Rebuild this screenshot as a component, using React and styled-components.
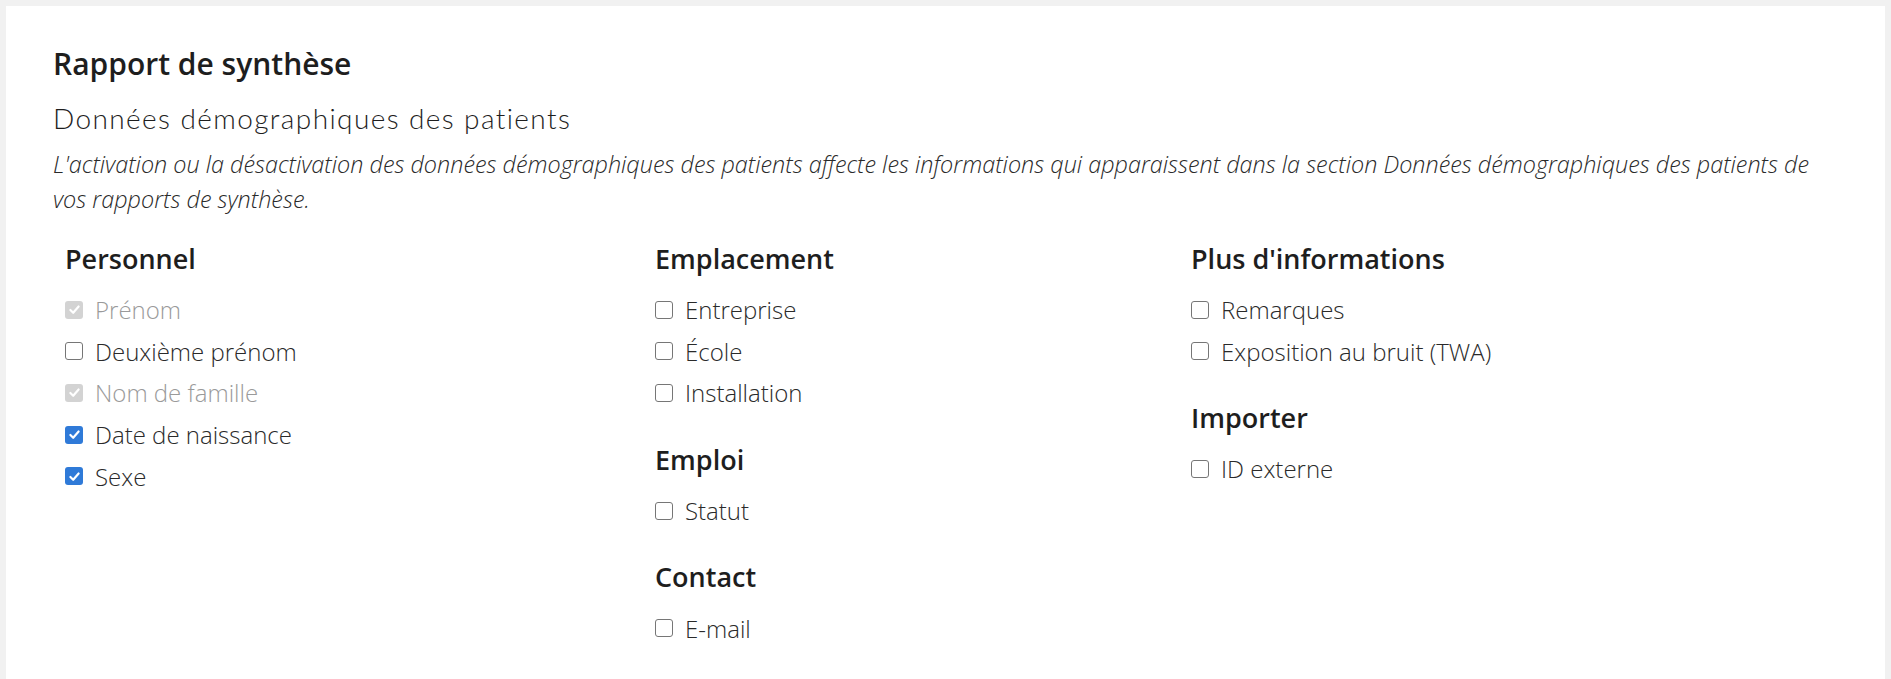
import React from "react";
import styled, { createGlobalStyle } from "styled-components";

const GlobalStyle = createGlobalStyle`
  html, body {
    margin: 0;
    padding: 0;
    background: #f1f1f1;
  }
  body {
    padding: 6px 6px 0 6px;
    font-family: "Open Sans", "Liberation Sans", sans-serif;
    color: #212121;
  }
`;

const Card = styled.div`
  background: #fff;
  box-sizing: border-box;
  min-height: calc(100vh - 6px);
  padding: 40px 47px 20px 47px;
`;

const Title = styled.h2`
  margin: 0;
  font-size: 30px;
  line-height: 35px;
  font-weight: 600;
  color: #1e1e1e;
`;

const Subtitle = styled.h3`
  margin: 22px 0 0 0;
  font-family: Lato, "Open Sans", sans-serif;
  font-size: 28px;
  line-height: 30px;
  font-weight: 300;
  letter-spacing: 1.4px;
  color: #1e1e1e;
`;

const Note = styled.p`
  margin: 14px 0 0 0;
  font-size: 23.4px;
  line-height: 35px;
  font-style: italic;
  font-weight: 300;
  color: #2a2a2a;
`;

const Columns = styled.div`
  display: grid;
  grid-template-columns: 590px 536px 1fr;
  margin-top: 25px;
`;

const Column = styled.div`
  padding-left: 12px;
`;

const Group = styled.div`
  & + & {
    margin-top: 29px;
  }
`;

const GroupTitle = styled.h4`
  margin: 0 0 13px 0;
  font-size: 27px;
  line-height: 34px;
  font-weight: 600;
  color: #1e1e1e;
`;

const Row = styled.label`
  display: flex;
  align-items: center;
  height: 41.6px;
  font-size: 24px;
  font-weight: 300;
  color: ${p => (p.$disabled ? "#9a9a9a" : "#2a2a2a")};
`;

const Box = styled.span`
  box-sizing: border-box;
  flex: none;
  width: 18px;
  height: 18px;
  margin: 0 12px 0 0;
  border-radius: 3px;
  display: flex;
  align-items: center;
  justify-content: center;
  border: ${p => (p.$checked ? "none" : "1.5px solid #767676")};
  background: ${p =>
    p.$checked ? (p.$disabled ? "#d3d3d3" : "#2f7ad8") : "#fff"};
`;

const Check = () => (
  <svg width="13" height="13" viewBox="0 0 12 12">
    <polyline
      points="2.2,6.4 4.8,9 9.8,3.2"
      fill="none"
      stroke="#fff"
      strokeWidth="2"
      strokeLinecap="round"
      strokeLinejoin="round"
    />
  </svg>
);

const Checkbox = ({ label, checked, disabled }) => (
  <Row $disabled={disabled}>
    <Box $checked={checked} $disabled={disabled}>
      {checked && <Check />}
    </Box>
    {label}
  </Row>
);

const columns = [
  [
    {
      title: "Personnel",
      items: [
        { label: "Prénom", checked: true, disabled: true },
        { label: "Deuxième prénom" },
        { label: "Nom de famille", checked: true, disabled: true },
        { label: "Date de naissance", checked: true },
        { label: "Sexe", checked: true }
      ]
    }
  ],
  [
    {
      title: "Emplacement",
      items: [{ label: "Entreprise" }, { label: "École" }, { label: "Installation" }]
    },
    { title: "Emploi", items: [{ label: "Statut" }] },
    { title: "Contact", items: [{ label: "E-mail" }] }
  ],
  [
    {
      title: "Plus d'informations",
      items: [{ label: "Remarques" }, { label: "Exposition au bruit (TWA)" }]
    },
    { title: "Importer", items: [{ label: "ID externe" }] }
  ]
];

export default function App() {
  return (
    <>
      <GlobalStyle />
      <Card>
        <Title>Rapport de synthèse</Title>
        <Subtitle>Données démographiques des patients</Subtitle>
        <Note>
          L'activation ou la désactivation des données démographiques des
          patients affecte les informations qui apparaissent dans la section
          Données démographiques des patients de vos rapports de synthèse.
        </Note>
        <Columns>
          {columns.map((groups, i) => (
            <Column key={i}>
              {groups.map(group => (
                <Group key={group.title}>
                  <GroupTitle>{group.title}</GroupTitle>
                  {group.items.map(item => (
                    <Checkbox key={item.label} {...item} />
                  ))}
                </Group>
              ))}
            </Column>
          ))}
        </Columns>
      </Card>
    </>
  );
}
